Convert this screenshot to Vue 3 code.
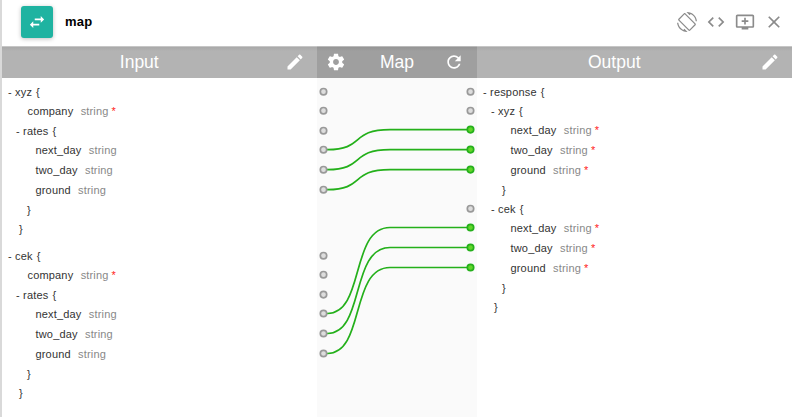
<script setup>
const field = (name, level, required = false) => ({ name, level, required, kind: 'field' })
const open = (name, level) => ({ name, level, kind: 'open' })
const close = (level) => ({ level, kind: 'close' })

const service = (name) => [
  open(name, 0),
  field('company', 1, true),
  open('rates', 1),
  field('next_day', 2),
  field('two_day', 2),
  field('ground', 2),
  close(1),
  { ...close(0), last: true },
]
const target = (name) => [
  open(name, 1),
  field('next_day', 2, true),
  field('two_day', 2, true),
  field('ground', 2, true),
  close(1),
]

const panels = {
  input: [...service('xyz'), ...service('cek')],
  output: [open('response', 0), ...target('xyz'), ...target('cek'), close(0)],
}

const inputPorts = [91.7, 110.7, 130.7, 149.7, 169.7, 189.7, 255.7, 274.7, 294.6, 313.5, 333.5, 353.5]
const outputPorts = [
  { y: 91.7 }, { y: 110.7 },
  { y: 129.6, on: true }, { y: 149.6, on: true }, { y: 169.6, on: true },
  { y: 208.7 },
  { y: 227.5, on: true }, { y: 247.5, on: true }, { y: 267.5, on: true },
]
const links = [
  [149.7, 129.6], [169.7, 149.6], [189.7, 169.6],
  [313.5, 227.5], [333.5, 247.5], [353.5, 267.5],
]
const top = 78
const curve = ([a, b]) => `M6.5 ${a - top}H10.5C48 ${a - top} 33 ${b - top} 73 ${b - top}H153.5`
</script>

<template>
  <div class="app">
    <header class="top">
      <div class="badge">
        <svg width="18" height="18" viewBox="0 0 24 24" fill="#fff"><path d="M7 11 2.500 15.500 7 20v-3.300h8v-2.400H7zM21.500 8.500 17 4v3.300H9v2.400h8V13z" /></svg>
      </div>
      <h1>map</h1>
      <nav class="tools">
        <svg width="20" height="20" viewBox="0 0 24 24"><path d="M16.480 2.520c3.270 1.550 5.610 4.720 5.970 8.480h1.500C23.440 4.840 18.290 0 12 0l-.66.030 3.810 3.810 1.330-1.320zm-6.250-.77c-.59-.59-1.540-.59-2.120 0L1.750 8.110c-.59.59-.59 1.540 0 2.120l12.020 12.020c.59.59 1.540.59 2.120 0l6.360-6.360c.59-.59.59-1.540 0-2.120L10.230 1.750zm4.600 19.440L2.810 9.170l6.360-6.360 12.020 12.020-6.360 6.360zm-7.310.29C4.250 19.940 1.910 16.760 1.550 13H.050C.56 19.160 5.710 24 12 24l.66-.03-3.810-3.810-1.330 1.320z" /></svg>
        <svg width="20" height="20" viewBox="0 0 24 24"><path d="M9.400 16.600 4.800 12l4.600-4.600L8 6l-6 6 6 6 1.400-1.400zm5.200 0 4.600-4.600-4.600-4.600L16 6l6 6-6 6-1.400-1.400z" /></svg>
        <svg width="20" height="20" viewBox="0 0 24 24"><path d="M21 3H3c-1.110 0-2 .89-2 2v12c0 1.100.89 2 2 2h5v2h8v-2h5c1.100 0 1.990-.9 1.990-2L23 5c0-1.110-.9-2-2-2zm0 14H3V5h18v12zm-5-7v2h-3v3h-2v-3H8v-2h3V7h2v3h3z" /></svg>
        <svg width="20" height="20" viewBox="0 0 24 24"><path d="M19 6.410 17.590 5 12 10.590 6.410 5 5 6.410 10.590 12 5 17.590 6.410 19 12 13.410 17.590 19 19 17.590 13.410 12z" /></svg>
      </nav>
    </header>

    <main class="columns">
      <section v-for="(rows, side) in panels" :key="side" class="panel" :class="side">
        <div class="bar">
          <span class="caption">{{ side === 'input' ? 'Input' : 'Output' }}</span>
          <svg class="edit" width="20" height="20" viewBox="0 0 24 24"><path d="M3 17.250V21h3.750L17.810 9.940l-3.750-3.750L3 17.250zM20.710 7.040c.39-.39.39-1.020 0-1.410l-2.340-2.340c-.39-.39-1.020-.39-1.410 0l-1.830 1.830 3.750 3.750 1.830-1.830z" /></svg>
        </div>
        <div class="tree">
          <div v-for="(row, i) in rows" :key="i" class="row" :class="[row.kind, 'level-' + row.level, { last: row.last }]">
            <template v-if="row.kind === 'open'"><span>- {{ row.name }}</span><span class="brace">{</span></template>
            <span v-else-if="row.kind === 'close'">}</span>
            <template v-else>
              <span>{{ row.name }}</span><span class="type">string</span><span v-if="row.required" class="star">*</span>
            </template>
          </div>
        </div>
      </section>

      <section class="panel mapping">
        <div class="bar dark">
          <svg width="20" height="20" viewBox="0 0 24 24"><path d="M19.430 12.980c.04-.32.07-.64.07-.98s-.03-.66-.07-.98l2.110-1.650c.19-.15.24-.42.12-.64l-2-3.460c-.12-.22-.39-.3-.61-.22l-2.490 1c-.52-.4-1.080-.73-1.690-.98l-.38-2.650C14.460 2.180 14.250 2 14 2h-4c-.25 0-.46.18-.49.42l-.38 2.650c-.61.25-1.170.59-1.690.98l-2.490-1c-.23-.09-.49 0-.61.22l-2 3.460c-.13.22-.07.49.12.64l2.110 1.650c-.04.32-.07.65-.07.98s.03.66.07.98l-2.110 1.650c-.19.15-.24.42-.12.64l2 3.460c.12.22.39.3.61.22l2.490-1c.52.4 1.080.73 1.690.98l.38 2.650c.03.24.24.42.49.42h4c.25 0 .46-.18.49-.42l.38-2.650c.61-.25 1.170-.59 1.690-.98l2.490 1c.23.09.49 0 .61-.22l2-3.460c.12-.22.07-.49-.12-.64l-2.110-1.650zM12 15.500c-1.930 0-3.500-1.570-3.500-3.500s1.570-3.500 3.500-3.500 3.500 1.570 3.500 3.500-1.570 3.500-3.500 3.500z" /></svg>
          <span class="title">Map</span>
          <svg width="20" height="20" viewBox="0 0 24 24"><path d="M17.650 6.350C16.200 4.900 14.210 4 12 4c-4.420 0-7.990 3.580-7.990 8s3.570 8 7.990 8c3.730 0 6.840-2.550 7.730-6h-2.080c-.82 2.330-3.040 4-5.650 4-3.310 0-6-2.690-6-6s2.690-6 6-6c1.660 0 3.140.69 4.220 1.780L13 11h7V4l-2.350 2.350z" /></svg>
        </div>
        <svg class="wires" width="160" height="339" viewBox="0 0 160 339">
          <g fill="none">
            <path v-for="link in links" :key="link[0]" :d="curve(link)" stroke="#24b01b" stroke-width="1.700" />
          </g>
          <circle v-for="y in inputPorts" :key="y" class="port" cx="6.500" :cy="y - top" r="3.200" />
          <circle v-for="p in outputPorts" :key="p.y" class="port" :class="{ on: p.on }" cx="153.500" :cy="p.y - top" r="3.200" />
        </svg>
      </section>
    </main>
  </div>
</template>

<style>
body {
  background: #fff;
  overflow: hidden;
}
</style>

<style scoped>
.app {
  box-sizing: border-box;
  width: 792px;
  height: 417px;
  overflow: hidden;
  border-left: 2px solid #d9d9d9;
  background: #fff;
  color: #333;
  font-family: "Liberation Sans", Arial, sans-serif;
}
.top {
  display: flex;
  align-items: center;
  box-sizing: border-box;
  height: 46px;
  padding: 0 8.500px 2px 19px;
}
.badge {
  display: flex;
  align-items: center;
  justify-content: center;
  width: 32px;
  height: 32px;
  border-radius: 3px;
  background: #1fb3a1;
  box-shadow: 0 1px 4px rgba(0, 0, 0, 0.25);
}
h1 {
  margin: 0 0 0 12px;
  color: #000;
  font-size: 13px;
  letter-spacing: 0.2px;
  line-height: 16px;
  font-weight: bold;
}
.tools {
  display: flex;
  align-items: center;
  gap: 9px;
  margin-left: auto;
  fill: #8b8b8b;
}
.columns {
  display: grid;
  grid-template-columns: 315px 160px 315px;
}
.panel {
  grid-row: 1;
}
.input {
  grid-column: 1;
}
.output {
  grid-column: 3;
}
.mapping {
  grid-column: 2;
  background: #fafafa;
}
.bar {
  display: flex;
  align-items: center;
  box-sizing: border-box;
  height: 32px;
  border-top: 1px solid #c6c6c6;
  background: linear-gradient(#a9a9a9, #b3b3b3 4px);
  color: #fff;
  fill: #fff;
  font-size: 17.500px;
}
.caption {
  flex: 1;
  text-align: center;
}
.edit {
  margin: 0 12.500px 2px 8px;
}
.dark {
  justify-content: space-between;
  padding: 0 13px 0 9px;
  border-top-color: #bababa;
  background: linear-gradient(#959595, #9f9f9f 4px);
}
.dark svg {
  margin-bottom: 2px;
}
.title {
  padding-left: 4px;
}
.tree {
  padding-top: 5px;
  font-size: 11px;
  letter-spacing: 0.17px;
  line-height: 19px;
}
.row {
  display: flex;
  height: 19px;
}
.field {
  height: 20px;
}
.last {
  height: 27px;
}
.open.level-0 {
  padding-left: 6px;
}
.open.level-1 {
  padding-left: 14px;
}
.field.level-1 {
  padding-left: 25.500px;
}
.field.level-2 {
  padding-left: 33.500px;
}
.close.level-1 {
  padding-left: 25px;
}
.close.level-0 {
  padding-left: 17px;
}
.brace {
  margin-left: 4px;
}
.type {
  margin-left: 7.300px;
  color: #888;
}
.star {
  margin-left: 3px;
  color: #f22;
}
.wires {
  display: block;
}
.port {
  fill: #ddd;
  stroke: #999;
  stroke-width: 1.700;
}
.port.on {
  fill: #62d52b;
  stroke: #24b01b;
}
</style>
